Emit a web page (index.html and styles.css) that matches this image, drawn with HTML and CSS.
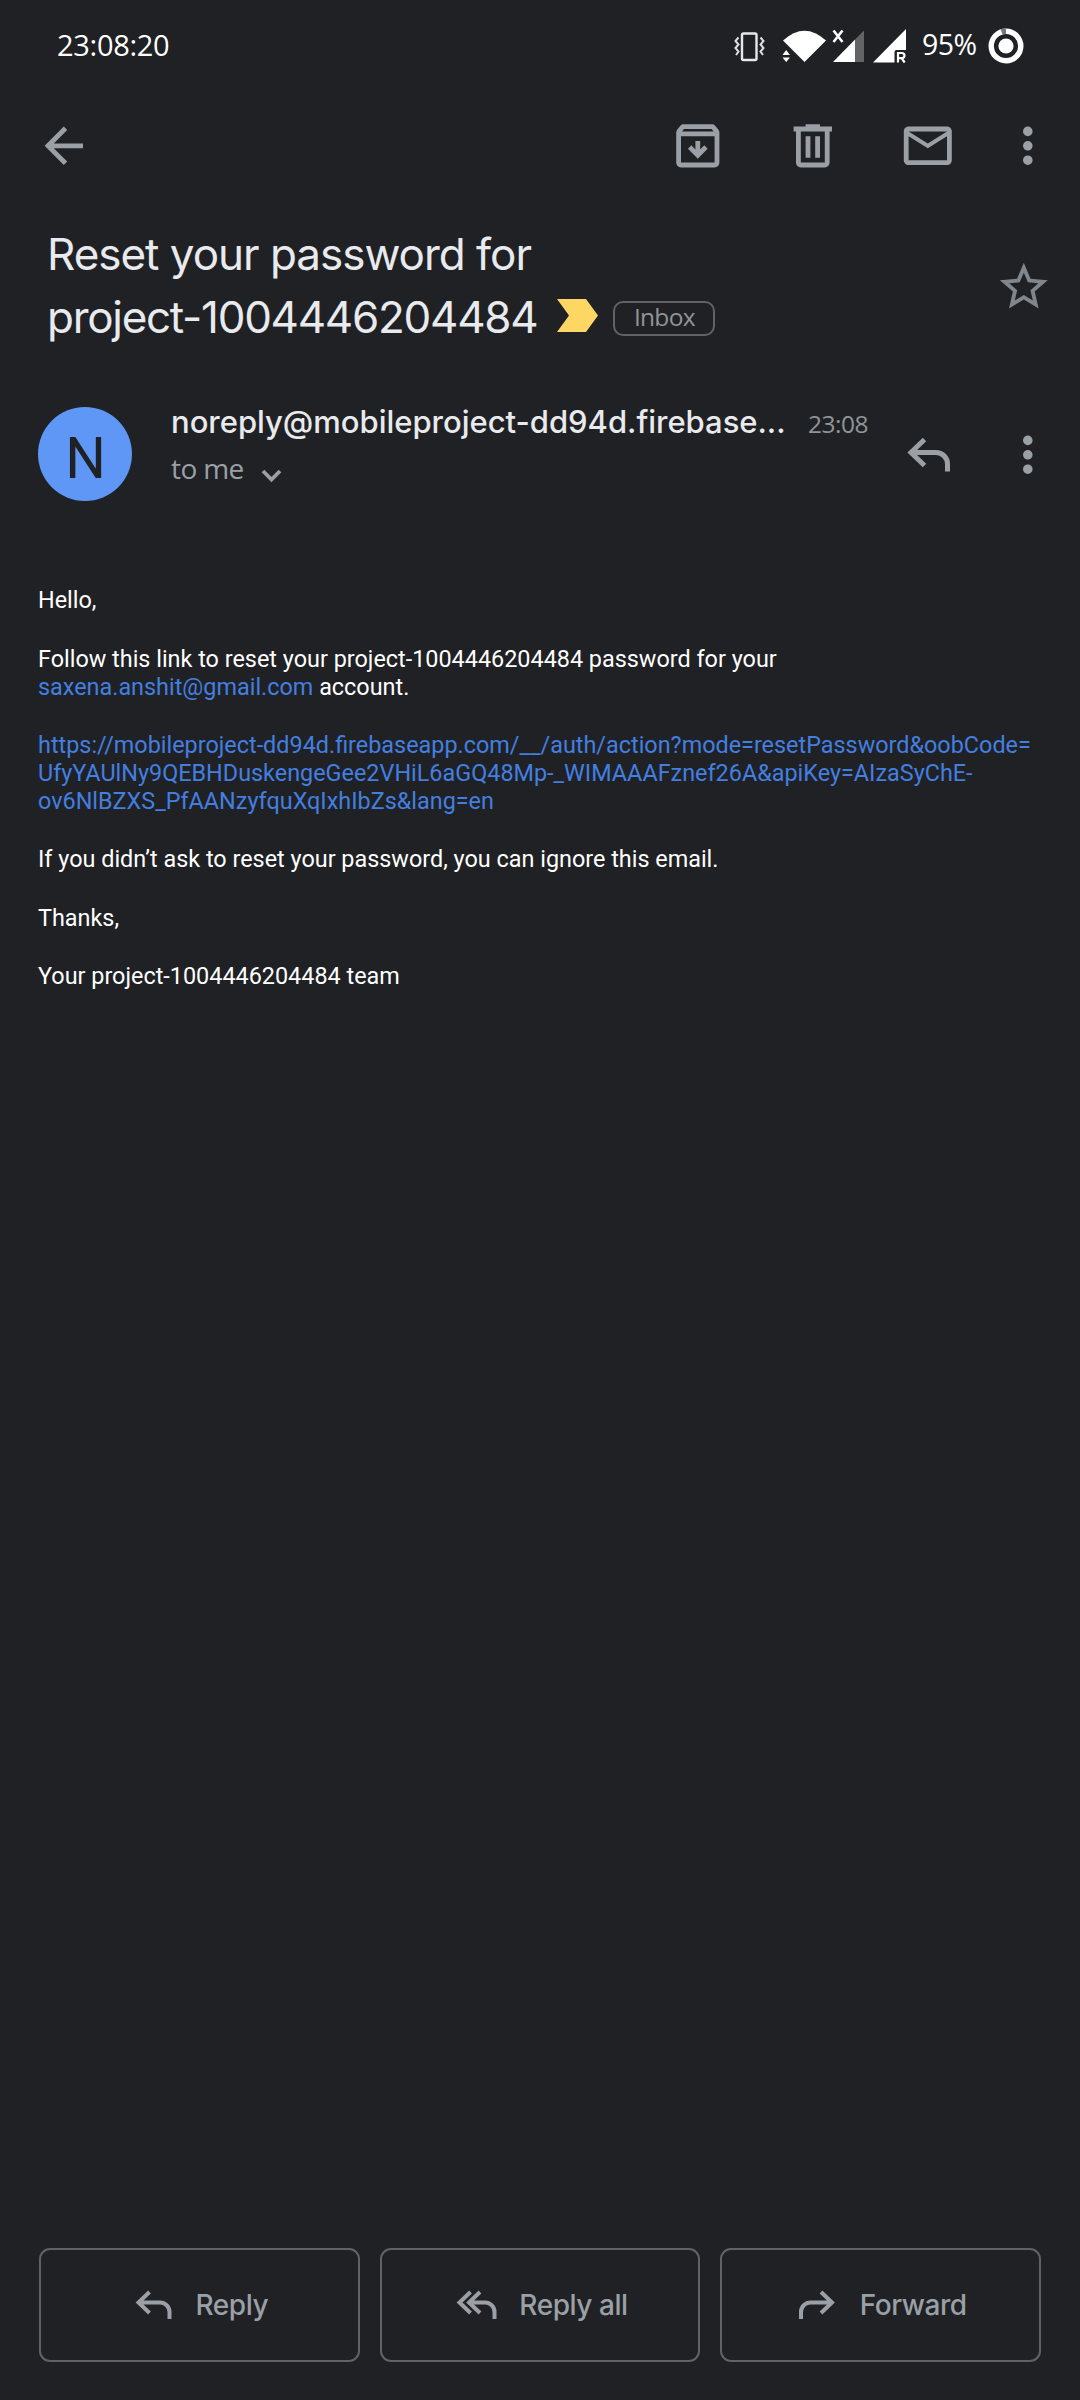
FILE: index.html
```html
<!DOCTYPE html>
<html lang="en">
<head>
<meta charset="utf-8">
<title>Reset your password</title>
<link rel="stylesheet" href="styles.css">
</head>
<body>
<div class="screen">
  <header class="status">
    <span class="clock">23:08:20</span>
    <div class="status-right">
      <svg class="status-icons" width="182" height="40" viewBox="730 26 182 40">
        <rect x="742" y="33.500" width="14.500" height="26.500" rx="1.500" fill="none" stroke="#e8e8e8" stroke-width="2.400"/>
        <path d="M738.500 37.500l-3 3.500 3 3.500-3 3.500 3 3.500-2.500 3.500M760.500 37.500l3 3.500-3 3.500 3 3.500-3 3.500 2.500 3.500" fill="none" stroke="#e0e0e0" stroke-width="2"/>
        <path d="M783 40.500Q804.500 21 826 40.500L804.500 62z" fill="#fff"/>
        <path d="M782.500 55l3.700-5 3.700 5zM782.500 57.500h7.400l-3.700 4.500z" fill="#fff" stroke="#202124" stroke-width="1" paint-order="stroke"/>
        <path d="M864 30.500V62h-9V39.500z" fill="#636466"/>
        <path d="M855 39.500V62H833z" fill="#fff"/>
        <path d="M833.500 30.500l9 11.500M842.500 30.500l-9 11.500" stroke="#fff" stroke-width="2.600"/>
        <path d="M906 29v21h-9.500q-2 0-2 2v10.500H873z" fill="#fff"/>
        <path d="M898 62.500V53h3.700q2.800 0 2.800 2.600t-2.800 2.600H898M901.500 58.200l3.200 4.300" fill="none" stroke="#fff" stroke-width="2.200"/>
      </svg>
      <span class="battery-text">95%</span>
      <svg class="battery" width="36" height="36" viewBox="0 0 36 36">
        <circle cx="18" cy="18" r="14.800" fill="none" stroke="#fff" stroke-width="5.400"/>
        <path d="M13.600 3.900A14.800 14.800 0 0 1 18 3.200" fill="none" stroke="#77787a" stroke-width="5.400"/>
        <circle cx="18" cy="18" r="7.600" fill="#fff"/>
      </svg>
    </div>
  </header>

  <nav class="appbar">
    <svg class="icon" viewBox="0 0 24 24"><path d="M20 11H7.830l5.590-5.590L12 4l-8 8 8 8 1.410-1.410L7.830 13H20z"/></svg>
    <div class="appbar-actions">
      <svg class="icon" viewBox="0 0 24 24"><path d="M20.540 5.230l-1.390-1.680C18.880 3.210 18.470 3 18 3H6c-.47 0-.88.21-1.160.55L3.460 5.230C3.170 5.570 3 6.020 3 6.500V19c0 1.100.9 2 2 2h14c1.100 0 2-.9 2-2V6.500c0-.48-.17-.93-.46-1.270zM6.240 5h11.520l.83 1H5.420zM5 19V8h14v11zM13 10h-2v3.500l-1.700-1.700-1.400 1.400L12 17.400l4.100-4.200-1.400-1.400-1.700 1.700z"/></svg>
      <svg class="icon" viewBox="0 0 24 24"><path d="M15 4V3H9v1H4v2h1v13c0 1.100.9 2 2 2h10c1.100 0 2-.9 2-2V6h1V4zm2 15H7V6h10zM9 8h2v9H9zm4 0h2v9h-2z"/></svg>
      <svg class="icon" viewBox="0 0 24 24"><path d="M20 4H4c-1.100 0-2 .9-2 2v12c0 1.100.9 2 2 2h16c1.100 0 2-.9 2-2V6c0-1.100-.9-2-2-2zm0 14H4V8l8 5 8-5zm-8-7L4 6h16z"/></svg>
      <svg class="icon" viewBox="0 0 24 24"><path d="M12 8a2 2 0 1 0 0-4 2 2 0 0 0 0 4zm0 2a2 2 0 1 0 0 4 2 2 0 0 0 0-4zm0 6a2 2 0 1 0 0 4 2 2 0 0 0 0-4z"/></svg>
    </div>
  </nav>

  <section class="subject">
    <h1 class="subject-text">
      <span class="line first">Reset your password for</span>
      <span class="line second"><span>project-1004446204484</span>
        <svg class="important" width="41" height="33" viewBox="0 0 41 33"><path d="M0 0h29l12 16.500L29 33H0l12-16.500z" fill="#fdd663"/></svg>
        <span class="label">Inbox</span>
      </span>
    </h1>
    <svg class="icon star" viewBox="0 0 24 24"><path d="M22 9.240l-7.190-.62L12 2 9.190 8.630 2 9.240l5.460 4.730L5.820 21 12 17.270 18.180 21l-1.630-7.030zM12 15.400l-3.760 2.270 1-4.280-3.320-2.880 4.380-.38L12 6.100l1.710 4.040 4.380.38-3.320 2.880 1 4.280z"/></svg>
  </section>

  <section class="sender">
    <div class="avatar">N</div>
    <div class="sender-info">
      <div class="sender-top"><span class="from">noreply@mobileproject-dd94d.firebase...</span><span class="time">23:08</span></div>
      <div class="sender-to"><span>to me</span><svg class="chevron" width="21" height="14" viewBox="0 0 21 14"><path d="M2 2l8.500 8.500L19 2" fill="none" stroke="#9aa0a6" stroke-width="3.800"/></svg></div>
    </div>
    <svg class="reply" width="46" height="38" viewBox="0 0 46 38"><path d="M18.500 3.500L5 16.500l13.500 13M5 16.500h25a11.500 11.500 0 0 1 11.500 11.500v7.500"/></svg>
    <svg class="icon" viewBox="0 0 24 24"><path d="M12 8a2 2 0 1 0 0-4 2 2 0 0 0 0 4zm0 2a2 2 0 1 0 0 4 2 2 0 0 0 0-4zm0 6a2 2 0 1 0 0 4 2 2 0 0 0 0-4z"/></svg>
  </section>

  <main class="message">
    <p>Hello,</p>
    <p>Follow this link to reset your project-1004446204484 password for your<br><a>saxena.anshit@gmail.com</a> account.</p>
    <p><a>https://mobileproject-dd94d.firebaseapp.com/__/auth/action?mode=resetPassword&amp;oobCode=<br>UfyYAUlNy9QEBHDuskengeGee2VHiL6aGQ48Mp-_WIMAAAFznef26A&amp;apiKey=AIzaSyChE-<br>ov6NlBZXS_PfAANzyfquXqIxhIbZs&amp;lang=en</a></p>
    <p>If you didn’t ask to reset your password, you can ignore this email.</p>
    <p>Thanks,</p>
    <p>Your project-1004446204484 team</p>
  </main>

  <footer class="actions">
    <div class="action"><svg width="40" height="32" viewBox="0 0 40 32"><path d="M15.500 3L4.500 13.500l11 10.500M4.500 13.500H26a9.500 9.500 0 0 1 9.500 9.500v7"/></svg><span>Reply</span></div>
    <div class="action"><svg width="42" height="32" viewBox="0 0 42 32"><path d="M15.500 3L4.500 13.500l11 10.500M25 3L14 13.500 25 24M14 13.500h16a9.500 9.500 0 0 1 9.500 9.500v7"/></svg><span>Reply all</span></div>
    <div class="action"><svg width="40" height="32" viewBox="1.500 0 40 32"><path d="M24.500 3l11 10.500-11 10.500M35.500 13.500H14A9.500 9.500 0 0 0 4.500 23v7"/></svg><span>Forward</span></div>
  </footer>
</div>
</body>
</html>
```
FILE: styles.css
```css
* { box-sizing: border-box; }

body {
  margin: 0;
  background: #202124;
  color: #e8eaed;
  font-family: "Open Sans", "Noto Sans", sans-serif;
}

.screen {
  width: 1080px;
  height: 2400px;
  display: flex;
  flex-direction: column;
}

.screen > * { flex-shrink: 0; }

.status {
  height: 92px;
  padding: 0 56px 0 57px;
  display: flex;
  align-items: center;
  justify-content: space-between;
  color: #fff;
  font-size: 29px;
  font-weight: 400;
}

.clock { padding-bottom: 4px; letter-spacing: -0.3px; }

.status-right {
  display: flex;
  align-items: center;
}

.battery-text {
  width: 76px;
  padding: 0 0 4px 10px;
  font-size: 28.5px;
  letter-spacing: -0.6px;
}

.icon {
  width: 57.6px;
  height: 57.6px;
  fill: #9aa0a6;
  flex: none;
}

.appbar {
  height: 107px;
  padding: 0 24px 0 35px;
  display: flex;
  align-items: center;
  justify-content: space-between;
}

.appbar-actions { display: flex; gap: 57.5px; }
.appbar-actions .icon:last-child { margin: 0 -0.5px 0 -15.5px; }

.subject {
  height: 173px;
  padding: 24px 27px 0 47px;
  display: flex;
  justify-content: space-between;
}

.subject-text {
  margin: 0;
  font: 400 44px/63px Inter, sans-serif;
}

.line {
  display: flex;
  align-items: center;
  height: 63px;
  white-space: nowrap;
}
.first { letter-spacing: -1.02px; }
.second { letter-spacing: -1.29px; }

.important { margin: -4px 15px 0 20px; }

.label {
  width: 102px;
  height: 35px;
  margin-top: 2px;
  border: 2px solid #5f6368;
  border-radius: 10px;
  color: #8f9499;
  font: 400 24.5px/28px "Open Sans", sans-serif;
  text-align: center;
  letter-spacing: -0.7px;
}

.star { margin-top: 35px; fill: #80868b; }

.sender {
  height: 164px;
  padding: 35px 23.5px 0 38px;
  display: flex;
}

.avatar {
  width: 94px;
  height: 94px;
  padding-left: 1px;
  border-radius: 50%;
  background: #5e97f6;
  color: #202124;
  font: 400 57px/103px Roboto, sans-serif;
  text-align: center;
}

.sender-info { margin: -1px 0 0 39px; width: 735px; }

.sender-top {
  display: flex;
  align-items: baseline;
  height: 46px;
  line-height: 32px;
}

.from {
  width: 637px;
  font: 500 31px/32px Inter, sans-serif;
  letter-spacing: -0.02px;
  white-space: nowrap;
}

.time {
  font-size: 24.5px;
  color: #8f9499;
  letter-spacing: -0.5px;
}

.sender-to {
  display: flex;
  align-items: center;
  height: 32px;
  font-size: 28px;
  line-height: 32px;
  letter-spacing: -0.6px;
  color: #9aa0a6;
}

.chevron { margin: 16px 0 0 17px; }

.reply {
  margin-top: 29px;
  fill: none;
  stroke: #9aa0a6;
  stroke-width: 5;
}

.sender .icon { margin: 19px 0 0 auto; }

.message {
  padding: 50.2px 0 0 38px;
  flex: 1;
  color: #fff;
  font: 23.4px/28px Roboto, sans-serif;
  white-space: nowrap;
}

.message p { margin: 0 0 30.4px; }
.message a { color: #437fe0; }

.actions {
  height: 152px;
  padding: 0 39px;
  display: flex;
  gap: 20px;
}

.action {
  flex: 1;
  height: 114px;
  padding-left: 3px;
  border: 2px solid #5f6368;
  border-radius: 11px;
  display: flex;
  align-items: center;
  justify-content: center;
  gap: 22px;
  color: #9aa0a6;
  font: 500 28px/32px Inter, sans-serif;
  letter-spacing: -0.45px;
}

.action span { padding-bottom: 1px; }

.action svg {
  fill: none;
  stroke: #9aa0a6;
  stroke-width: 4;
}
```
